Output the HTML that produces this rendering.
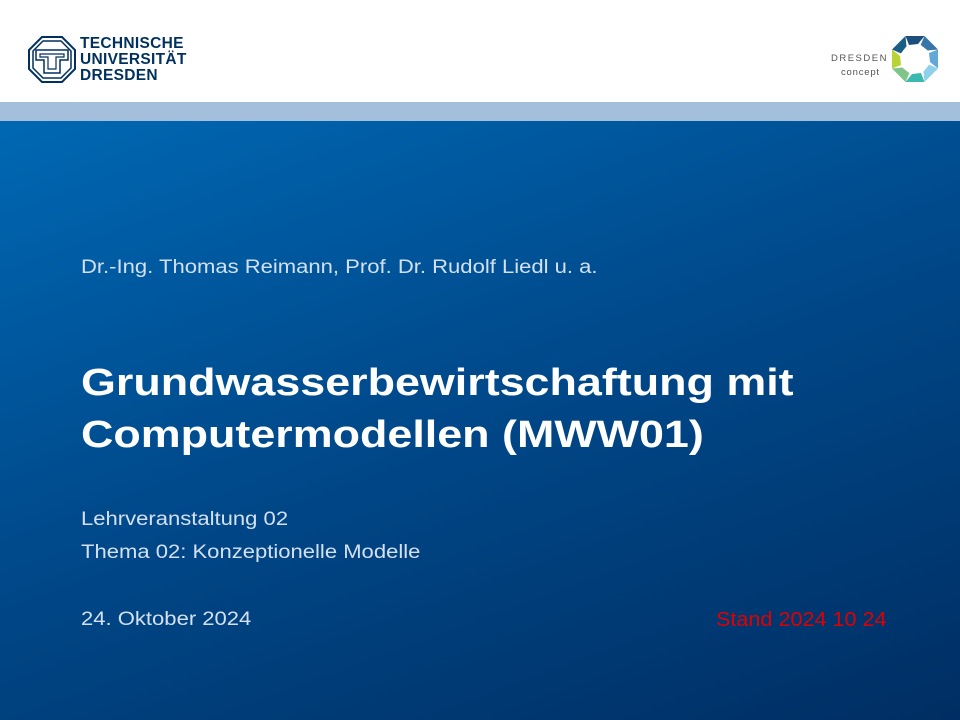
<!DOCTYPE html><html><head><style>
body{margin:0;width:960px;height:720px;overflow:hidden;font-family:"Liberation Sans",sans-serif;position:relative}
.hdr{position:absolute;left:0;top:0;width:960px;height:102px;background:#fff}
.band{position:absolute;left:0;top:102px;width:960px;height:19px;background:#a3bfdc}
.main{position:absolute;left:0;top:121px;width:960px;height:599px;background:linear-gradient(160deg,#0068b3 0%,#004a8c 45%,#002e63 100%)}
.t{position:absolute;left:81px;color:#d3e0f0;font-size:19px;white-space:nowrap;transform:scaleX(1.16);transform-origin:0 0}
.tu{position:absolute;left:80px;top:36px;font-weight:bold;font-size:15.5px;line-height:16px;color:#00305e;letter-spacing:0.3px}
</style></head><body>
<div class="hdr"></div>
<svg style="position:absolute;left:28px;top:36px" width="48" height="47" viewBox="0 0 48 47">
<polygon points="14,1 34,1 47,14 47,33 34,46 14,46 1,33 1,14" fill="none" stroke="#00305e" stroke-width="2"/>
<polygon points="15,5 33,5 43,15 43,32 33,42 15,42 5,32 5,15" fill="none" stroke="#00305e" stroke-width="1.5"/>
<path d="M8,14 H40 V24 H32 V37 H16 V24 H8 Z" fill="none" stroke="#00305e" stroke-width="1.5"/>
<path d="M12,18 H36 V21 H28 V33 H20 V21 H12 Z" fill="none" stroke="#00305e" stroke-width="1.2"/>
</svg>
<div class="tu">TECHNISCHE<br>UNIVERSITÄT<br>DRESDEN</div>
<div style="position:absolute;left:831px;top:52px;font-size:9.5px;color:#555;letter-spacing:1.5px;line-height:14px">DRESDEN<br><span style="letter-spacing:0.8px;padding-left:10px">concept</span></div>
<svg style="position:absolute;left:890px;top:34px" width="50" height="50" viewBox="-25 -25 50 50">
<g stroke="none">
<polygon points="-9.5,-23 9.5,-23 3,-15 -6,-14" fill="#1d4f7c" transform="rotate(0)"/>
<polygon points="-9.5,-23 9.5,-23 3,-15 -6,-14" fill="#3a75a8" transform="rotate(45)"/>
<polygon points="-9.5,-23 9.5,-23 3,-15 -6,-14" fill="#62a8d6" transform="rotate(90)"/>
<polygon points="-9.5,-23 9.5,-23 3,-15 -6,-14" fill="#8fd0ea" transform="rotate(135)"/>
<polygon points="-9.5,-23 9.5,-23 3,-15 -6,-14" fill="#3bb8b0" transform="rotate(180)"/>
<polygon points="-9.5,-23 9.5,-23 3,-15 -6,-14" fill="#7fc58a" transform="rotate(225)"/>
<polygon points="-9.5,-23 9.5,-23 3,-15 -6,-14" fill="#b7d334" transform="rotate(270)"/>
<polygon points="-9.5,-23 9.5,-23 3,-15 -6,-14" fill="#1a5e86" transform="rotate(315)"/>
</g></svg>
<div class="band"></div>
<div class="main"></div>
<div class="t" style="top:257px">Dr.-Ing. Thomas Reimann, Prof. Dr. Rudolf Liedl u. a.</div>
<div class="t" style="top:357px;color:#fff;font-weight:bold;font-size:38px;line-height:52px;transform:scaleX(1.18)">Grundwasserbewirtschaftung mit<br>Computermodellen (MWW01)</div>
<div class="t" style="top:509px">Lehrveranstaltung 02</div>
<div class="t" style="top:542px">Thema 02: Konzeptionelle Modelle</div>
<div class="t" style="top:609px">24. Oktober 2024</div>
<div class="t" style="top:609px;left:716px;color:#e00000;font-size:20px;transform:scaleX(1.08)">Stand 2024 10 24</div>
</body></html>
